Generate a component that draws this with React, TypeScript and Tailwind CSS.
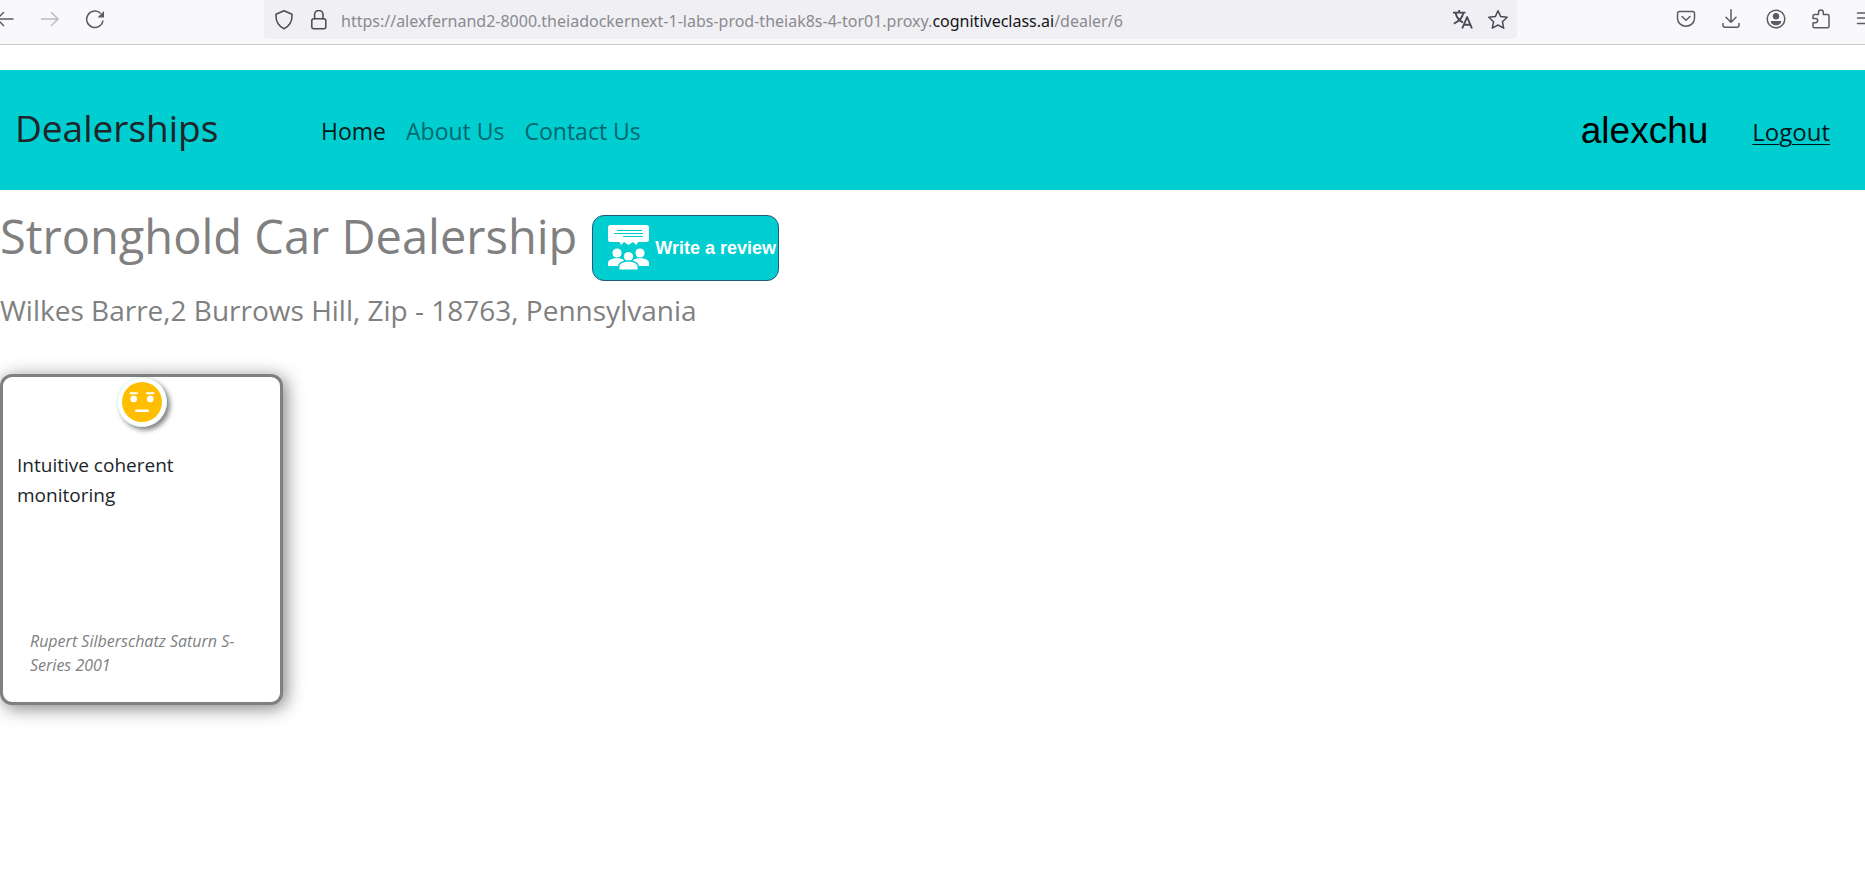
import React from "react";

type IconProps = { children: React.ReactNode; className?: string };

function Icon({ children, className = "" }: IconProps) {
  return (
    <svg
      viewBox="0 0 20 20"
      width="20"
      height="20"
      fill="none"
      stroke="currentColor"
      strokeWidth="1.5"
      strokeLinecap="round"
      strokeLinejoin="round"
      aria-hidden="true"
      className={className}
    >
      {children}
    </svg>
  );
}

function ToolButton({ label, children, muted = false }: { label: string; children: React.ReactNode; muted?: boolean }) {
  return (
    <button
      type="button"
      aria-label={label}
      className={`flex h-[38px] w-[45px] shrink-0 items-center justify-center ${muted ? "text-[#bcbbc4]" : "text-[#5b5b66]"}`}
    >
      <Icon>{children}</Icon>
    </button>
  );
}

function BrowserBar() {
  return (
    <div className="flex h-[45px] items-start overflow-hidden border-b border-[#cccccc] bg-[#f9f9fb]">
      <div className="-ml-[18px] flex">
        <ToolButton label="Back">
          <path d="M18 10H2.500M8.500 3.500L2 10l6.500 6.500" />
        </ToolButton>
        <ToolButton label="Forward" muted>
          <path d="M1.500 10h16.500M11.500 3.500L18 10l-6.500 6.500" />
        </ToolButton>
        <ToolButton label="Reload">
          <path d="M18 11.500A8.200 8.200 0 1 1 15.800 4.600" strokeLinecap="butt" />
          <path d="M19 2v6.500h-6.500z" fill="currentColor" stroke="none" />
        </ToolButton>
      </div>
      <div className="ml-[147px] mr-[146px] flex h-[39px] flex-1 items-center rounded-b bg-[#f0f0f4] pl-[10px] pr-[9px] text-[#4a4a55]">
        <Icon className="shrink-0">
          <path d="M10 .8l8 3.400c.4 7-2.500 12-8 14.500C4.500 16.200 1.600 11.200 2 4.200z" />
        </Icon>
        <Icon className="ml-[15px] shrink-0">
          <rect x="2.800" y="8.800" width="14" height="10" rx="2" />
          <path d="M5.600 8.800V4.600a4.200 4.200 0 0 1 8.400 0v4.200" />
        </Icon>
        <div className="ml-3 flex-1 whitespace-nowrap pt-[2px] font-['Noto_Sans',sans-serif] text-base text-[#8a8a8f]">
          https://alexfernand2-8000.theiadockernext-1-labs-prod-theiak8s-4-tor01.proxy.
          <span className="text-[#15141a]">cognitiveclass.ai</span>/dealer/6
        </div>
        <button type="button" aria-label="Translate this page">
          <Icon>
            <path d="M0 2.600h12.500M6.200 0v2.600M2.600 3c1 4.200 4 7.800 7.400 9.500M10.300 3C9.300 8 5.500 11.500 .8 13.700" strokeWidth="1.900" strokeLinecap="butt" />
            <path d="M9.200 18.500l4.900-11.500 4.900 11.500M10.900 14.800h6.500" strokeWidth="1.900" strokeLinecap="butt" />
          </Icon>
        </button>
        <button type="button" aria-label="Bookmark this page" className="ml-[15px]">
          <Icon>
            <path d="M10 .8l2.700 5.800 6.500.7-4.800 4.400 1.300 6.500L10 15 4.300 18.200l1.300-6.500L.8 7.300l6.500-.7z" />
          </Icon>
        </button>
      </div>
      <div className="-mr-[23px] flex">
        <ToolButton label="Save to Pocket">
          <path d="M3.500 2.500h13a2 2 0 0 1 2 2v4.700a8.500 8 0 0 1-17 0V4.500a2 2 0 0 1 2-2z" />
          <path d="M6 7.500l4 3.800 4-3.800" />
        </ToolButton>
        <ToolButton label="Downloads">
          <path d="M10 .8v12M5 8.200l5 5 5-5M2 14.500v1.800a2 2 0 0 0 2 2h12a2 2 0 0 0 2-2v-1.800" />
        </ToolButton>
        <ToolButton label="Account">
          <circle cx="10" cy="10" r="8.800" />
          <circle cx="10" cy="7.200" r="3.200" fill="currentColor" stroke="none" />
          <path d="M4.700 12h10.600c0 2.600-2.300 4.200-5.300 4.200S4.700 14.600 4.700 12z" fill="currentColor" stroke="none" />
        </ToolButton>
        <ToolButton label="Extensions">
          <path d="M3.500 5.500h4v-2a2.400 2.400 0 0 1 4.800 0v2h4.200a1.500 1.500 0 0 1 1.500 1.500v10.300a1.500 1.500 0 0 1-1.500 1.500h-13A1.500 1.500 0 0 1 2 17.300v-3.500h2.500a2.200 2.200 0 0 0 0-4.400H2V7a1.500 1.500 0 0 1 1.500-1.500z" />
        </ToolButton>
        <ToolButton label="Menu">
          <path d="M1.500 4h17M1.500 9h17M1.500 14.500h17" />
        </ToolButton>
      </div>
    </div>
  );
}

function NavBar() {
  return (
    <nav className="mt-[25px] flex h-[120px] items-center bg-[#00ced1] pl-[15px] pr-[35px]">
      <h2 className="w-[306px] pb-1.5 text-[37px] leading-none text-[#212529]">Dealerships</h2>
      <div className="flex gap-5 pt-0.5 text-[23px] text-[#00676c]">
        <a href="#home" className="text-black/90">Home</a>
        <a href="#about">About Us</a>
        <a href="#contact">Contact Us</a>
      </div>
      <div className="ml-auto flex items-center gap-11">
        <span className="font-['Liberation_Sans',sans-serif] text-[37px] leading-none text-black">alexchu</span>
        <a href="#logout" className="pt-[3px] text-2xl text-black/90 underline decoration-1 underline-offset-3">Logout</a>
      </div>
    </nav>
  );
}

function Person({ x, y }: { x: number; y: number }) {
  return (
    <g transform={`translate(${x} ${y})`}>
      <circle cx="0" cy="0" r="4.600" />
      <path d="M-9 13v-3c0-3 4-4.800 9-4.800s9 1.800 9 4.800v3z" />
    </g>
  );
}

function ReviewButton() {
  return (
    <a
      href="#review"
      className="flex h-[66px] w-[187px] items-center rounded-xl border border-[#24597a] bg-[#00ced1] pl-[15px] font-['Liberation_Sans',sans-serif] text-lg font-bold text-white"
    >
      <svg viewBox="0 0 41 46" width="41" height="46" fill="white" aria-hidden="true" className="shrink-0">
        <path d="M2.500 0h36A2.500 2.500 0 0 1 41 2.500v12a2.500 2.500 0 0 1-2.500 2.500H30l-1.500 3-3.500-3-4.500 3-4.500-3-3 3-1.500-3h-9A2.500 2.500 0 0 1 0 14.500v-12A2.500 2.500 0 0 1 2.500 0z" />
        <path d="M9 5.500h25M6 8.500h29M15 11.500h20" stroke="#00ced1" strokeWidth="1" />
        <Person x={9} y={28} />
        <Person x={32} y={28} />
        <g stroke="#00ced1" strokeWidth="3" paintOrder="stroke">
          <Person x={20.500} y={31.500} />
        </g>
      </svg>
      <span className="ml-1.5 whitespace-nowrap">Write a review</span>
    </a>
  );
}

function NeutralFace() {
  return (
    <svg
      viewBox="0 0 50 50"
      width="50"
      height="50"
      role="img"
      aria-label="Neutral"
      className="mx-auto shrink-0 rounded-full bg-white shadow-[3px_3px_5px_rgba(0,0,0,0.5)]"
    >
      <circle cx="25" cy="25" r="24.700" fill="white" stroke="#b5ebe0" strokeWidth=".6" />
      <circle cx="25" cy="25" r="20" fill="#ffbf00" />
      <g fill="white">
        <circle cx="16.700" cy="22" r="3.300" />
        <circle cx="33.300" cy="22" r="3.300" />
        <rect x="12.500" y="15.300" width="8.500" height="2" rx="1" />
        <rect x="29" y="15.300" width="8.500" height="2" rx="1" />
        <rect x="18" y="32.600" width="14" height="2.400" rx="1.200" />
      </g>
    </svg>
  );
}

function ReviewCard() {
  return (
    <article className="mt-[46px] flex h-[331px] w-[283px] flex-col rounded-xl border-[3px] border-[#808080] bg-white shadow-[3px_3px_18px_rgba(0,0,0,0.5)]">
      <NeutralFace />
      <p className="mt-[23px] w-[200px] pl-3.5 text-[19px] leading-[30px] text-[#212529]">Intuitive coherent monitoring</p>
      <p className="mb-[25px] mt-auto pl-[27px] pr-7 text-base italic leading-6 text-[#808080]">
        Rupert Silberschatz Saturn S-Series 2001
      </p>
    </article>
  );
}

export default function App() {
  return (
    <div className="min-h-screen overflow-x-hidden bg-white font-['Open_Sans','Noto_Sans',sans-serif]">
      <BrowserBar />
      <NavBar />
      <main className="pt-[25px] text-[#808080]">
        <div className="flex items-start gap-[15px]">
          <h1 className="-mt-2 whitespace-nowrap text-[47px] leading-[58px]">Stronghold Car Dealership</h1>
          <ReviewButton />
        </div>
        <h4 className="mt-[11px] text-[28px] leading-9">Wilkes Barre,2 Burrows Hill, Zip - 18763, Pennsylvania</h4>
        <ReviewCard />
      </main>
    </div>
  );
}
